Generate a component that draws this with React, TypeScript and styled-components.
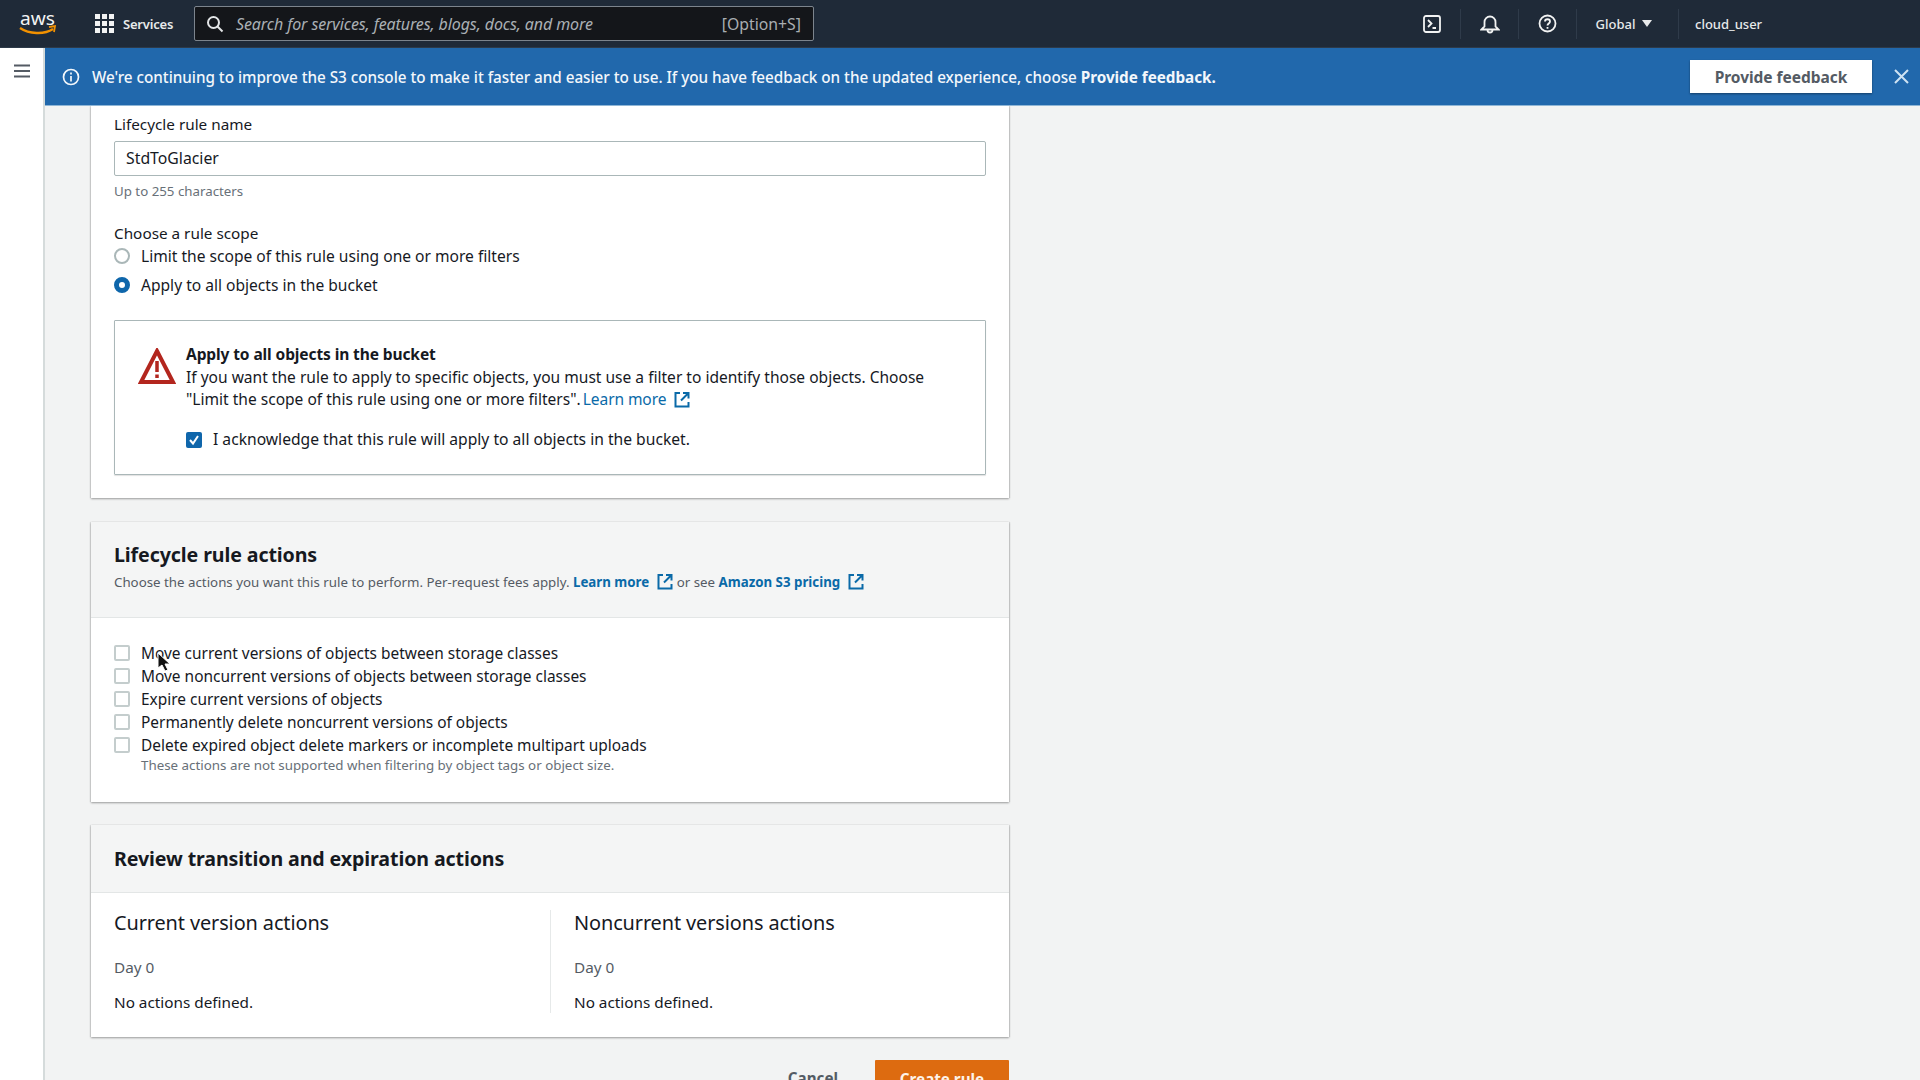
import React from "react";
import styled, { createGlobalStyle } from "styled-components";

const Global = createGlobalStyle`
  html, body { margin: 0; padding: 0; height: 100%; overflow: hidden; background: #f2f3f3; }
  body { font-family: "Noto Sans", "Open Sans", "Liberation Sans", sans-serif; color: #16191f; }
  * { box-sizing: border-box; }
`;

const Page = styled.div`
  width: 1920px; height: 1080px; display: flex; flex-direction: column; overflow: hidden; position: relative;
`;
const TopBar = styled.header`
  height: 48px; flex: none; background: #1f2a38; display: flex; align-items: center; color: #e8eaeb;
  border-bottom: 1px solid #2d3a49;
`;
const LogoBox = styled.div`
  width: 75px; padding-left: 19px; display: flex; align-items: center; flex: none;
  svg { overflow: visible; }
`;
const Services = styled.div`
  display: flex; align-items: center; gap: 9px; width: 119px; padding-left: 20px; font-size: 13px; font-weight: 600; flex: none; letter-spacing: -0.2px;
`;
const SearchBox = styled.div`
  width: 620px; height: 35px; background: #14161a; border: 1px solid #7c848d; border-radius: 2px;
  display: flex; align-items: center; padding: 0 12px 0 11px; gap: 12px; font-size: 16px; color: #aab0b5; flex: none;
`;
const SearchHint = styled.span`
  font-style: italic; flex: 1; letter-spacing: -0.1px; white-space: nowrap;
`;
const SearchKey = styled.span`
  font-size: 15.8px; color: #a9aeb2; white-space: nowrap;
`;
const TopRight = styled.div`
  margin-left: auto; display: flex; align-items: center; height: 100%;
`;
const TopIcon = styled.div`
  width: 58px; height: 30px; display: flex; align-items: center; justify-content: center; border-right: 1px solid #2f3b4a;
`;
const Region = styled.div`
  width: 102px; height: 30px; padding-right: 7px; display: flex; align-items: center; justify-content: center; gap: 7px; font-size: 13px; font-weight: 500; border-right: 1px solid #2f3b4a;
`;
const Caret = styled.span`
  width: 0; height: 0; border-left: 5px solid transparent; border-right: 5px solid transparent; border-top: 7px solid #e8eaeb;
`;
const UserName = styled.div`
  width: 241px; padding-left: 16px; font-size: 13px; font-weight: 500;
`;
const Body = styled.div`
  flex: 1; display: flex; min-height: 0; background: #f2f3f3;
`;
const SideRail = styled.aside`
  width: 45px; flex: none; background: #fff; border-right: 2px solid #d5dbdb; padding: 13px 0 0 14px; color: #545b64;
`;
const Main = styled.div`
  flex: 1; min-width: 0; display: flex; flex-direction: column; position: relative;
`;
const Banner = styled.div`
  height: 58px; flex: none; background: #2168ac; color: #f3f7fb; display: flex; align-items: center; padding: 0 11px 0 17px;
  font-size: 15.27px; border-bottom: 1px solid #8fb6d6; letter-spacing: -0.03px;
`;
const BannerText = styled.span`
  margin-left: 12px; flex: 1; font-weight: 500; white-space: nowrap;
  b { font-weight: 700; }
`;
const FeedbackButton = styled.div`
  width: 182px; height: 33px; background: #fff; color: #545b64; font-weight: 700; font-size: 15.5px;
  display: flex; align-items: center; justify-content: center; box-shadow: 0 1px 2px rgba(0,0,0,.4);
`;
const CloseBox = styled.div`
  width: 37px; display: flex; justify-content: flex-end; color: #cfe3f3;
`;
const Content = styled.div`
  flex: 1; overflow: hidden; padding: 0 0 0 46px; width: 1000px; display: flex; flex-direction: column;
`;
const Card = styled.section`
  width: 918px; flex: none; background: #fff; box-shadow: 0 1px 2px rgba(0,0,0,.35), 1px 0 1px rgba(0,0,0,.1), -1px 0 1px rgba(0,0,0,.08);
`;
const FirstCard = styled(Card)`
  padding: 8px 23px 24px 23px; height: 392px; margin-bottom: 24px;
`;
const FieldLabel = styled.div`
  font-size: 15.3px; line-height: 20px; color: #16191f;
`;
const TextInput = styled.div`
  height: 35px; margin-top: 7px; border: 1px solid #aab7b8; border-radius: 2px; padding: 0 11px 2px; font-size: 15.8px; display: flex; align-items: center;
`;
const Hint = styled.div`
  margin-top: 7px; font-size: 13.3px; line-height: 16px; color: #687078;
`;
const ScopeLabel = styled(FieldLabel)`
  margin-top: 24px;
`;
const OptionRow = styled.div<{ $h: number }>`
  height: ${p => p.$h}px; display: flex; align-items: center; gap: 11px; font-size: 15.45px; white-space: nowrap;
`;
const RadioRow = styled(OptionRow)`
  font-size: 15.58px;
`;
const RadioDot = styled.span<{ $on?: boolean }>`
  width: 16px; height: 16px; flex: none; border-radius: 50%; background: #fff;
  border: ${p => (p.$on ? "5px solid #0e66ab" : "2px solid #aab7b8")};
`;
const AlertBox = styled.div`
  margin-top: 20px; height: 155px; border: 1px solid #aab7b8; border-radius: 1px; display: flex; padding: 22px 24px 0 23px; box-shadow: 0 1px 1px rgba(0,0,0,.12);
`;
const AlertIcon = styled.div`
  width: 48px; flex: none; padding-top: 5px;
`;
const AlertBody = styled.div`
  flex: 1; font-size: 15.55px; line-height: 22.5px;
`;
const AlertTitle = styled.div`
  font-weight: 700; letter-spacing: -0.12px;
`;
const Link = styled.span<{ $bold?: boolean }>`
  color: #0a6aa8; font-weight: ${p => (p.$bold ? 700 : 500)}; white-space: nowrap;
  svg { margin: 0 0 -3px 8px; }
`;
const AlertLink = styled(Link)`
  margin-left: -2px; font-weight: 400; letter-spacing: -0.1px;
`;
const AckRow = styled(OptionRow)`
  margin-top: 18px; font-size: 15.65px;
`;
const CheckBox = styled.span<{ $on?: boolean }>`
  width: 16px; height: 16px; flex: none; border-radius: 2px; display: flex; align-items: center; justify-content: center;
  background: ${p => (p.$on ? "#0f66ab" : "#fff")};
  border: ${p => (p.$on ? "none" : "2px solid #c4cdcd")};
`;
const CardHeader = styled.div<{ $h: number }>`
  height: ${p => p.$h}px; background: #f4f5f5; border-bottom: 1px solid #e3e6e6; padding: 0 23px;
`;
const CardTitle = styled.h2<{ $top: number }>`
  margin: 0; padding-top: ${p => p.$top}px; font-size: 19.6px; line-height: 26px; font-weight: 700; letter-spacing: -0.1px;
`;
const CardSub = styled.div`
  margin-top: 5px; font-size: 13.3px; line-height: 18px; color: #545b64; white-space: nowrap;
`;
const ActionsCard = styled(Card)`
  height: 280px; margin-bottom: 23px;
`;
const ActionsList = styled.div`
  padding: 23px 23px 0;
`;
const SubHint = styled.div`
  margin: 0 0 0 27px; font-size: 13.35px; line-height: 18px; color: #687078;
`;
const ReviewCard = styled(Card)`
  height: 212px;
`;
const Columns = styled.div`
  display: grid; grid-template-columns: 459px 1fr; padding: 17px 0 0;
`;
const Column = styled.div<{ $divider?: boolean }>`
  padding-left: 23px; height: 103px;
  border-left: ${p => (p.$divider ? "1px solid #e6e9e9" : "none")};
`;
const ColumnTitle = styled.h3`
  margin: 0; font-size: 19.9px; line-height: 26px; font-weight: 400; letter-spacing: -0.1px;
`;
const DayLabel = styled.div`
  margin-top: 21px; font-size: 15.3px; line-height: 20px; color: #545b64;
`;
const NoActions = styled.div`
  margin-top: 15px; font-size: 15.3px; line-height: 20px;
`;
const Footer = styled.div`
  width: 918px; flex: none; margin-top: 23px; display: flex; justify-content: flex-end; align-items: flex-start; gap: 37px;
`;
const CancelButton = styled.div`
  font-weight: 700; font-size: 15.2px; line-height: 37px; color: #545b64;
`;
const CreateButton = styled.div`
  width: 134px; height: 40px; padding-bottom: 3px; background: #dd6b10; color: #fdf3ea; font-weight: 700; font-size: 15.2px; display: flex; align-items: center; justify-content: center; border-radius: 1px;
`;
const Pointer = styled.svg`
  position: absolute; left: 157px; top: 652px;
`;

const External = () => (
  <svg width="16" height="17" viewBox="0 0 16 17" fill="none" stroke="#0a6aa8" strokeWidth="2">
    <path d="M6 2H1.500v13.500h13V11M9 2h5.500v5.500M14 2.500 7 9.500" />
  </svg>
);
const Tick = () => (
  <svg width="12" height="12" viewBox="0 0 12 12" fill="none" stroke="#fff" strokeWidth="2">
    <path d="M2 6l3 3.500L10 2" />
  </svg>
);

const actions = [
  "Move current versions of objects between storage classes",
  "Move noncurrent versions of objects between storage classes",
  "Expire current versions of objects",
  "Permanently delete noncurrent versions of objects",
  "Delete expired object delete markers or incomplete multipart uploads",
];

export default function App() {
  return (
    <Page>
      <Global />
      <TopBar>
        <LogoBox>
          <svg width="38" height="25" viewBox="0 0 38 25" fill="none">
            <text x="1" y="14" fontFamily="Noto Sans, sans-serif" fontSize="18" fill="#f2f3f3" textLength="35" lengthAdjust="spacingAndGlyphs">aws</text>
            <path d="M1 17c9 6 24 7 33 1" stroke="#f29100" strokeWidth="2.400" />
            <path d="M30 16l6-1-1 6" stroke="#f29100" strokeWidth="1.800" />
          </svg>
        </LogoBox>
        <Services>
          <svg width="19" height="19" viewBox="0 0 19 19" fill="#f2f3f3">
            {[0, 7, 14].flatMap(y => [0, 7, 14].map(x => <rect key={`${x}-${y}`} x={x} y={y} width="5" height="5" />))}
          </svg>
          Services
        </Services>
        <SearchBox>
          <svg width="18" height="18" viewBox="0 0 18 18" fill="none" stroke="#e3e5e7" strokeWidth="2">
            <circle cx="7.500" cy="7.500" r="5.500" />
            <path d="M11.500 11.500l5 5" />
          </svg>
          <SearchHint>Search for services, features, blogs, docs, and more</SearchHint>
          <SearchKey>[Option+S]</SearchKey>
        </SearchBox>
        <TopRight>
          <TopIcon>
            <svg width="18" height="18" viewBox="0 0 18 18" fill="none" stroke="#f2f3f3" strokeWidth="1.800">
              <rect x="1" y="1" width="16" height="16" rx="2" />
              <path d="M5 5l3.500 3.500L5 12M9.500 13H13" />
            </svg>
          </TopIcon>
          <TopIcon>
            <svg width="20" height="20" viewBox="0 0 20 20" fill="none" stroke="#f2f3f3" strokeWidth="1.800">
              <path d="M1.500 15.500l3-3V8a5.500 5.500 0 0 1 11 0v4.500l3 3zM7.500 16a2.500 2.500 0 0 0 5 0" />
            </svg>
          </TopIcon>
          <TopIcon>
            <svg width="19" height="19" viewBox="0 0 19 19" fill="none" stroke="#f2f3f3" strokeWidth="1.800">
              <circle cx="9.500" cy="9.500" r="8" />
              <path d="M7 7.500c0-3 5-3 5 0 0 2-2.500 2-2.500 4M9.500 13v1.800" />
            </svg>
          </TopIcon>
          <Region>Global <Caret /></Region>
          <UserName>cloud_user</UserName>
        </TopRight>
      </TopBar>
      <Body>
        <SideRail>
          <svg width="16" height="14" viewBox="0 0 16 14" fill="none" stroke="#545b64" strokeWidth="1.800">
            <path d="M0 1.500h16M0 7h16M0 12.500h16" />
          </svg>
        </SideRail>
        <Main>
          <Banner>
            <svg width="18" height="18" viewBox="0 0 18 18" fill="none" stroke="#f3f7fb" strokeWidth="1.700">
              <circle cx="9" cy="9" r="7.500" />
              <path d="M9 8v5.500M9 4.500v2" />
            </svg>
            <BannerText>We're continuing to improve the S3 console to make it faster and easier to use. If you have feedback on the updated experience, choose <b>Provide feedback.</b></BannerText>
            <FeedbackButton>Provide feedback</FeedbackButton>
            <CloseBox>
              <svg width="15" height="15" viewBox="0 0 15 15" fill="none" stroke="#cfe3f3" strokeWidth="2">
                <path d="M1 1l13 13M14 1L1 14" />
              </svg>
            </CloseBox>
          </Banner>
          <Content>
            <FirstCard>
              <FieldLabel>Lifecycle rule name</FieldLabel>
              <TextInput>StdToGlacier</TextInput>
              <Hint>Up to 255 characters</Hint>
              <ScopeLabel>Choose a rule scope</ScopeLabel>
              <RadioRow $h={26}><RadioDot />Limit the scope of this rule using one or more filters</RadioRow>
              <RadioRow $h={31}><RadioDot $on />Apply to all objects in the bucket</RadioRow>
              <AlertBox>
                <AlertIcon>
                  <svg width="38" height="38" viewBox="0 0 38 38" fill="none">
                    <path d="M19 3 35 34H3z" stroke="#b3261e" strokeWidth="4" strokeLinejoin="miter" fill="#fff" />
                    <path d="M19 13v11M19 26.500v3.500" stroke="#b3261e" strokeWidth="3.500" />
                  </svg>
                </AlertIcon>
                <AlertBody>
                  <AlertTitle>Apply to all objects in the bucket</AlertTitle>
                  <div>If you want the rule to apply to specific objects, you must use a filter to identify those objects. Choose<br />"Limit the scope of this rule using one or more filters". <AlertLink>Learn more<External /></AlertLink></div>
                  <AckRow $h={22}><CheckBox $on><Tick /></CheckBox>I acknowledge that this rule will apply to all objects in the bucket.</AckRow>
                </AlertBody>
              </AlertBox>
            </FirstCard>
            <ActionsCard>
              <CardHeader $h={96}>
                <CardTitle $top={20}>Lifecycle rule actions</CardTitle>
                <CardSub>Choose the actions you want this rule to perform. Per-request fees apply. <Link $bold>Learn more<External /></Link> or see <Link $bold>Amazon S3 pricing<External /></Link></CardSub>
              </CardHeader>
              <ActionsList>
                {actions.map(a => (
                  <OptionRow $h={23} key={a}><CheckBox />{a}</OptionRow>
                ))}
                <SubHint>These actions are not supported when filtering by object tags or object size.</SubHint>
              </ActionsList>
            </ActionsCard>
            <ReviewCard>
              <CardHeader $h={68}>
                <CardTitle $top={21}>Review transition and expiration actions</CardTitle>
              </CardHeader>
              <Columns>
                <Column>
                  <ColumnTitle>Current version actions</ColumnTitle>
                  <DayLabel>Day 0</DayLabel>
                  <NoActions>No actions defined.</NoActions>
                </Column>
                <Column $divider>
                  <ColumnTitle>Noncurrent versions actions</ColumnTitle>
                  <DayLabel>Day 0</DayLabel>
                  <NoActions>No actions defined.</NoActions>
                </Column>
              </Columns>
            </ReviewCard>
            <Footer>
              <CancelButton>Cancel</CancelButton>
              <CreateButton>Create rule</CreateButton>
            </Footer>
          </Content>
        </Main>
      </Body>
      <Pointer width="14" height="20" viewBox="0 0 14 20">
        <path d="M1 1v15l4-3 3 6 3-1-3-6h5z" fill="#111" stroke="#fff" strokeWidth="1" />
      </Pointer>
    </Page>
  );
}
